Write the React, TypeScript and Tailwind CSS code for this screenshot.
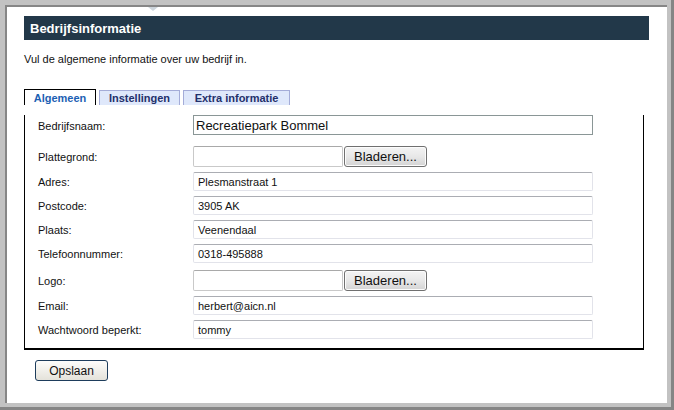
import React from 'react'

const font = "font-['Liberation_Sans',Arial,sans-serif]"

type Row = { label: string; value?: string; kind: 'big' | 'text' | 'file'; mt: string }

const rows: Row[] = [
  { label: 'Bedrijfsnaam:', value: 'Recreatiepark Bommel', kind: 'big', mt: 'mt-[10px]' },
  { label: 'Plattegrond:', kind: 'file', mt: 'mt-[11px]' },
  { label: 'Adres:', value: 'Plesmanstraat 1', kind: 'text', mt: 'mt-[5px]' },
  { label: 'Postcode:', value: '3905 AK', kind: 'text', mt: 'mt-[5px]' },
  { label: 'Plaats:', value: 'Veenendaal', kind: 'text', mt: 'mt-[5px]' },
  { label: 'Telefoonnummer:', value: '0318-495888', kind: 'text', mt: 'mt-[5px]' },
  { label: 'Logo:', kind: 'file', mt: 'mt-[7px]' },
  { label: 'Email:', value: 'herbert@aicn.nl', kind: 'text', mt: 'mt-[5px]' },
  { label: 'Wachtwoord beperkt:', value: 'tommy', kind: 'text', mt: 'mt-[5px]' },
]

const Field: React.FC<{ row: Row }> = ({ row }) => {
  if (row.kind === 'big') {
    return (
      <div className="flex h-[20px] w-[400px] items-center border border-[#8a9696] bg-white pl-[2px] pt-[1px] text-[13px] text-[#111]">
        {row.value}
      </div>
    )
  }
  if (row.kind === 'file') {
    return (
      <div className="flex h-[21px] items-center">
        <div className="h-[21px] w-[150px] rounded-[2px] border border-[#c9c9c9] border-t-[#a9a9a9] bg-white" />
        <button className="ml-[1px] flex h-[21px] w-[83px] items-center justify-center rounded-[3px] border border-[#707070] bg-gradient-to-b from-[#f4f4f4] via-[#e8e8e8] to-[#d4d4d4] pt-[1px] text-[13px] text-[#111] shadow-[inset_0_0_0_1px_#fcfcfc]">
          Bladeren...
        </button>
      </div>
    )
  }
  return (
    <div className="flex h-[19px] w-[400px] items-center rounded-[2px] border border-[#e2e3ea] border-t-[#abadb3] bg-white pl-[4px] pt-[1px] text-[11px] text-[#111]">
      {row.value}
    </div>
  )
}

const App: React.FC = () => {
  return (
    <div className={`${font} h-[410px] w-[674px] overflow-hidden`}>
      <div className="relative h-[410px] w-[674px] border-r-[3px] border-b-[3px] border-[#858585] bg-[#c2c2c2] pt-[5px] pl-[5px] pr-[4px] pb-[4px]">
        <div className="pointer-events-none absolute left-[148px] top-[7px] h-0 w-0 border-x-[5px] border-t-[4px] border-x-transparent border-t-[#cdd5dc]" />
        <div className="h-full w-full border-t-2 border-l-2 border-[#868686] bg-white pt-[9px] pl-[17px] pr-[18px]">
          <div className="flex h-[24px] items-center bg-[#223849] pl-[6px] pt-[1px] text-[13px] font-bold text-white">
            Bedrijfsinformatie
          </div>
          <p className="mt-[12px] text-[11px] leading-[14px] text-[#111]">
            Vul de algemene informatie over uw bedrijf in.
          </p>

          <div className="mt-[23px] flex items-end gap-[3px] text-[11px] font-bold">
            <div className="flex h-[16px] w-[72px] items-center justify-center border border-b-0 border-black bg-white pt-[1px] text-[#1c5fb3]">
              Algemeen
            </div>
            <div className="flex h-[15px] w-[81px] items-center justify-center border border-b-0 border-[#a4acd8] bg-[#dfe8fb] pt-[1px] text-[#23306b]">
              Instellingen
            </div>
            <div className="flex h-[15px] w-[107px] items-center justify-center border border-b-0 border-[#a4acd8] bg-[#dfe8fb] pt-[1px] text-[#23306b]">
              Extra informatie
            </div>
          </div>

          <div className="mt-[4px] mr-[5px] border-x border-b-2 border-black pb-[9px] pl-[13px]">
            {rows.map((row, i) => (
              <div key={i} className={`${row.mt} flex items-center`}>
                <span className="w-[155px] pt-[2px] text-[11px] text-[#111]">{row.label}</span>
                <Field row={row} />
              </div>
            ))}
          </div>

          <button className="mt-[10px] ml-[11px] flex h-[21px] w-[73px] items-center justify-center rounded-[3px] border border-[#1e3d5c] bg-gradient-to-b from-[#fdfdfb] to-[#e4e2da] pt-[1px] text-[12px] text-[#111]">
            Opslaan
          </button>
        </div>
      </div>
    </div>
  )
}

export default App
